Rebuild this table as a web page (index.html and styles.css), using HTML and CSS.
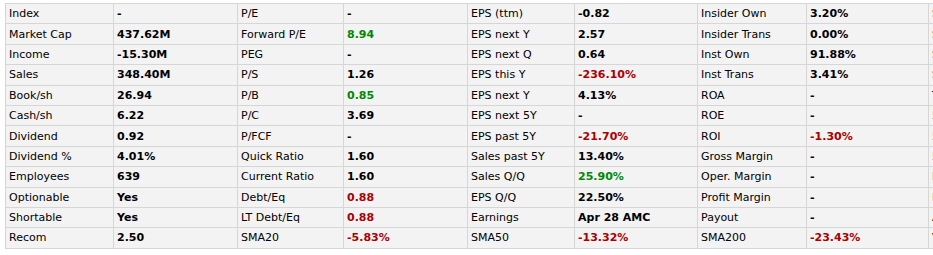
FILE: index.html
```html
<!DOCTYPE html>
<html>
<head>
<meta charset="utf-8">
<link rel="stylesheet" href="styles.css">
</head>
<body>
<div class="wrap">
<table class="snapshot">
<colgroup>
<col class="c-l1"><col class="c-v1"><col class="c-l2"><col class="c-v2"><col class="c-l3"><col class="c-v3"><col class="c-l4"><col class="c-v4"><col class="c-l5"><col class="c-v5">
</colgroup>
<tbody>
<tr><td class="lbl">Index</td><td class="val">-</td><td class="lbl">P/E</td><td class="val">-</td><td class="lbl">EPS (ttm)</td><td class="val">-0.82</td><td class="lbl">Insider Own</td><td class="val">3.20%</td><td class="lbl">Shs Outstand</td><td class="val">32.87M</td></tr>
<tr><td class="lbl">Market Cap</td><td class="val">437.62M</td><td class="lbl">Forward P/E</td><td class="val pos">8.94</td><td class="lbl">EPS next Y</td><td class="val">2.57</td><td class="lbl">Insider Trans</td><td class="val">0.00%</td><td class="lbl">Shs Float</td><td class="val">31.80M</td></tr>
<tr><td class="lbl">Income</td><td class="val">-15.30M</td><td class="lbl">PEG</td><td class="val">-</td><td class="lbl">EPS next Q</td><td class="val">0.64</td><td class="lbl">Inst Own</td><td class="val">91.88%</td><td class="lbl">Short Float</td><td class="val">4.10%</td></tr>
<tr><td class="lbl">Sales</td><td class="val">348.40M</td><td class="lbl">P/S</td><td class="val">1.26</td><td class="lbl">EPS this Y</td><td class="val neg">-236.10%</td><td class="lbl">Inst Trans</td><td class="val">3.41%</td><td class="lbl">Short Ratio</td><td class="val">3.51</td></tr>
<tr><td class="lbl">Book/sh</td><td class="val">26.94</td><td class="lbl">P/B</td><td class="val pos">0.85</td><td class="lbl">EPS next Y</td><td class="val">4.13%</td><td class="lbl">ROA</td><td class="val">-</td><td class="lbl">Target Price</td><td class="val">21.00</td></tr>
<tr><td class="lbl">Cash/sh</td><td class="val">6.22</td><td class="lbl">P/C</td><td class="val">3.69</td><td class="lbl">EPS next 5Y</td><td class="val">-</td><td class="lbl">ROE</td><td class="val">-</td><td class="lbl">52W Range</td><td class="val">12.01 - 27.40</td></tr>
<tr><td class="lbl">Dividend</td><td class="val">0.92</td><td class="lbl">P/FCF</td><td class="val">-</td><td class="lbl">EPS past 5Y</td><td class="val neg">-21.70%</td><td class="lbl">ROI</td><td class="val neg">-1.30%</td><td class="lbl">52W High</td><td class="val">-</td></tr>
<tr><td class="lbl">Dividend %</td><td class="val">4.01%</td><td class="lbl">Quick Ratio</td><td class="val">1.60</td><td class="lbl">Sales past 5Y</td><td class="val">13.40%</td><td class="lbl">Gross Margin</td><td class="val">-</td><td class="lbl">52W Low</td><td class="val">-</td></tr>
<tr><td class="lbl">Employees</td><td class="val">639</td><td class="lbl">Current Ratio</td><td class="val">1.60</td><td class="lbl">Sales Q/Q</td><td class="val pos">25.90%</td><td class="lbl">Oper. Margin</td><td class="val">-</td><td class="lbl">RSI (14)</td><td class="val">-</td></tr>
<tr><td class="lbl">Optionable</td><td class="val">Yes</td><td class="lbl">Debt/Eq</td><td class="val neg">0.88</td><td class="lbl">EPS Q/Q</td><td class="val">22.50%</td><td class="lbl">Profit Margin</td><td class="val">-</td><td class="lbl">Rel Volume</td><td class="val">-</td></tr>
<tr><td class="lbl">Shortable</td><td class="val">Yes</td><td class="lbl">LT Debt/Eq</td><td class="val neg">0.88</td><td class="lbl">Earnings</td><td class="val">Apr 28 AMC</td><td class="lbl">Payout</td><td class="val">-</td><td class="lbl">Avg Volume</td><td class="val">-</td></tr>
<tr><td class="lbl">Recom</td><td class="val">2.50</td><td class="lbl">SMA20</td><td class="val neg">-5.83%</td><td class="lbl">SMA50</td><td class="val neg">-13.32%</td><td class="lbl">SMA200</td><td class="val neg">-23.43%</td><td class="lbl">Volume</td><td class="val">-</td></tr>
</tbody>
</table>
</div>
</body>
</html>
```
FILE: styles.css
```css
html, body {
  margin: 0;
  padding: 0;
  background: #ffffff;
  overflow: hidden;
}
.wrap {
  padding: 3px 0 0 5px;
  width: 1300px;
}
.snapshot {
  border-collapse: collapse;
  table-layout: fixed;
  width: 1151px;
  font-family: "DejaVu Sans", Verdana, sans-serif;
  font-size: 11px;
}
.c-l1 { width: 108px; }
.c-v1 { width: 124px; }
.c-l2 { width: 106px; }
.c-v2 { width: 124px; }
.c-l3 { width: 107px; }
.c-v3 { width: 123px; }
.c-l4 { width: 109px; }
.c-v4 { width: 122px; }
.c-l5 { width: 106px; }
.c-v5 { width: 122px; }
.snapshot td {
  background: #f3f3f3;
  border: 1px solid #d6d6d6;
  height: 18.4px;
  padding: 1px 3px 0 3px;
  white-space: nowrap;
  overflow: hidden;
  color: #000000;
  line-height: 14px;
  vertical-align: middle;
}
.snapshot td.val {
  font-weight: bold;
}
.snapshot td.pos { color: #008800; }
.snapshot td.neg { color: #aa0000; }
```
